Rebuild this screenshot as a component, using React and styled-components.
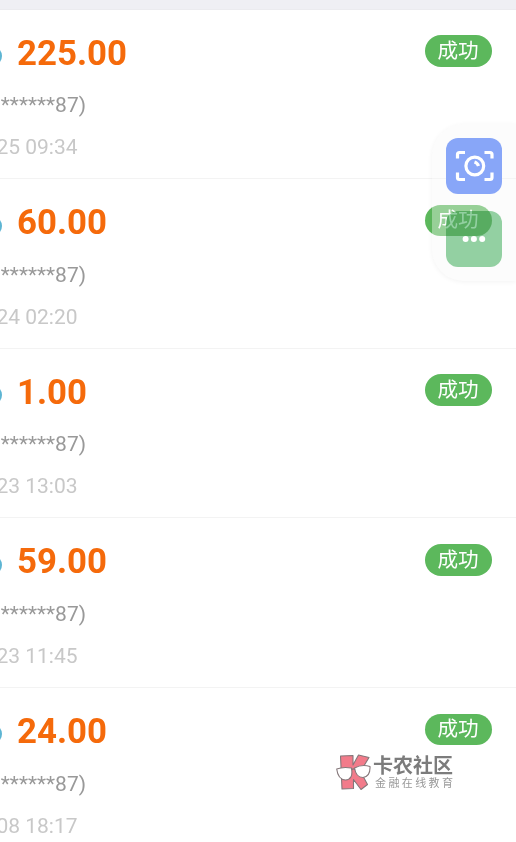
import React from 'react';
import styled, { createGlobalStyle } from 'styled-components';

const GlobalStyle = createGlobalStyle`
  * { box-sizing: border-box; }
  html, body { margin: 0; background: #fff; overflow: hidden; }
`;

const Screen = styled.main`
  position: relative;
  width: 516px;
  height: 842px;
  overflow: hidden;
  background: #fff;
  font-family: Roboto, "Noto Sans CJK SC", sans-serif;
`;

const TopStrip = styled.div`
  height: 9.5px;
  background: #efeff4;
  border-bottom: 1px solid #ebebef;
`;

const Row = styled.article`
  display: flex;
  justify-content: space-between;
  height: 169.6px;
  padding: 22.6px 24px 0 0;
  border-bottom: 1px solid #f3f3f3;
`;

const Details = styled.div`
  display: flex;
  flex-direction: column;
`;

const AmountLine = styled.div`
  display: flex;
  align-items: center;
  height: 42px;
  padding-bottom: 1.2px;
`;

const IconEdge = styled.span`
  width: 2px;
  height: 20px;
  margin: 7px 15px 0 0;
  overflow: hidden;
  display: flex;
  justify-content: flex-end;
`;

const IconDisc = styled.i`
  flex: none;
  width: 20px;
  height: 20px;
  border-radius: 50%;
  background: #5db5d3;
`;

const Amount = styled.strong`
  font-size: 34.8px;
  line-height: 42px;
  font-weight: 700;
  color: #f56a0b;
`;

const Meta = styled.div`
  display: flex;
  justify-content: flex-end;
  width: ${(p) => p.$width}px;
  height: 42px;
  line-height: 42px;
  font-size: 21px;
  white-space: pre;
  color: ${(p) => p.$color};
  margin-top: ${(p) => p.$gap || 0}px;
`;

const Status = styled.span`
  display: flex;
  align-items: center;
  justify-content: center;
  width: 67px;
  height: 31.5px;
  margin-top: 3.2px;
  padding: 0 1px 0.6px 0;
  border-radius: 16px;
  background: #5cb85c;
  color: #fff;
  font-size: 20.6px;
  line-height: 30px;
`;

const FloatingDock = styled.aside`
  position: absolute;
  top: 124px;
  right: 0;
  display: flex;
  flex-direction: column;
  gap: 17px;
  width: 84px;
  height: 157px;
  padding: 14px;
  border-radius: 32px 0 0 32px;
  background: rgba(246, 246, 246, 0.38);
  box-shadow: 0 1px 5px rgba(0, 0, 0, 0.05);
`;

const DockButton = styled.button`
  position: relative;
  width: 56px;
  height: 56px;
  flex: none;
  padding: 0;
  border: 0;
  background: none;

  &::before {
    content: "";
    position: absolute;
    inset: 0;
    border-radius: 12px;
    background: ${(p) => p.$fill};
    mix-blend-mode: ${(p) => (p.$tint ? 'multiply' : 'normal')};
  }

  svg {
    position: relative;
    display: block;
  }
`;

const Watermark = styled.div`
  position: absolute;
  left: 336px;
  top: 754px;
  display: flex;
  gap: 2px;
`;

const Brand = styled.div`
  display: flex;
  flex-direction: column;
  font-family: "Noto Sans CJK SC", sans-serif;
  white-space: nowrap;
`;

const BrandName = styled.span`
  font-size: 20px;
  line-height: 22px;
  font-weight: 700;
  color: #7c7c7c;
`;

const BrandTag = styled.span`
  margin-left: 2px;
  font-size: 11px;
  line-height: 13px;
  letter-spacing: 2.4px;
  color: #999;
`;

const records = [
  ['225.00', '25 09:34'],
  ['60.00', '24 02:20'],
  ['1.00', '23 13:03'],
  ['59.00', '23 11:45'],
  ['24.00', '08 18:17'],
];

function ScanIcon() {
  return (
    <svg width="56" height="56" viewBox="0 0 56 56" fill="none" stroke="#fff" strokeWidth="3.2">
      <path d="M11.5 20.500v-4q0-2 2-2h5.500M38.500 14.500h5.500q2 0 2 2v4M11.500 34.500v5q0 2 2 2h5.500M38.500 41.500h5.500q2 0 2-2v-5" />
      <circle cx="28.800" cy="28" r="8.900" />
      <path d="M28.500 24q3 1 4 4" strokeWidth="3.200" />
    </svg>
  );
}

function MoreIcon() {
  return (
    <svg width="56" height="56" viewBox="0 0 56 56" fill="#fff">
      <circle cx="19.600" cy="28" r="3" />
      <circle cx="27.900" cy="28" r="3" />
      <circle cx="36.200" cy="28" r="3" />
    </svg>
  );
}

function KLogo() {
  return (
    <svg width="35" height="37" viewBox="0 0 35 37" stroke="#85777a" strokeWidth="1.100" strokeLinejoin="round">
      <path d="M4.500 2L17 1.500V11L22.500 1L33 3.500L24.500 17.500L31.500 30.500L25 35.500L17.500 25.500V34.500L6 35Z" fill="#f27b8a" />
      <path d="M.7 15Q7 12.500 15.500 14Q17.500 25.500 9.500 26Q2 25.500 .7 15ZM18.500 14Q26 10 34 12.500Q34.500 22.500 27 23.500Q20 23.500 18.500 14Z" fill="#fff" />
      <path d="M15.500 16Q17 14 19 15.500" fill="none" />
    </svg>
  );
}

export default function App() {
  return (
    <>
      <GlobalStyle />
      <Screen>
        <TopStrip />
        {records.map(([amount, time]) => (
          <Row key={time}>
            <Details>
              <AmountLine>
                <IconEdge><IconDisc /></IconEdge>
                <Amount>{amount}</Amount>
              </AmountLine>
              <Meta $width={86} $color="#999" $gap={10.2}>******87)</Meta>
              <Meta $width={77.5} $color="#c8c8c8">{time}</Meta>
            </Details>
            <Status>成功</Status>
          </Row>
        ))}
        <FloatingDock>
          <DockButton $fill="#88a6f8" aria-label="scan"><ScanIcon /></DockButton>
          <DockButton $fill="#95d3a4" $tint aria-label="more"><MoreIcon /></DockButton>
        </FloatingDock>
        <Watermark>
          <KLogo />
          <Brand>
            <BrandName>卡农社区</BrandName>
            <BrandTag>金融在线教育</BrandTag>
          </Brand>
        </Watermark>
      </Screen>
    </>
  );
}
